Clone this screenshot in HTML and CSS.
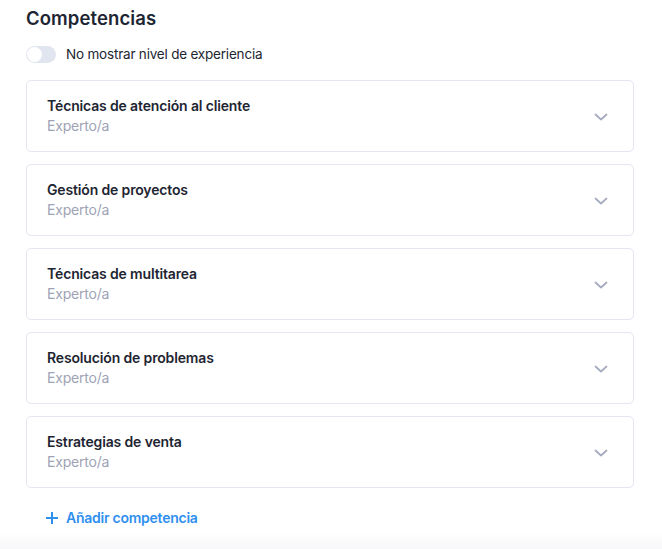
FILE: index.html
```html
<!DOCTYPE html>
<html lang="es">
<head>
<meta charset="utf-8">
<link rel="stylesheet" href="styles.css">
</head>
<body>
<div class="page">
  <h2 class="title">Competencias</h2>
  <label class="toggle-row">
    <span class="toggle"><span class="knob"></span></span>
    <span class="toggle-label">No mostrar nivel de experiencia</span>
  </label>
  <div class="list">
    <div class="card">
      <div class="card-text"><div class="card-title">Técnicas de atención al cliente</div><div class="card-sub">Experto/a</div></div>
      <svg class="chev" width="14" height="8" viewBox="0 0 14 8"><path d="M1.5 1.5 L7 6.5 L12.5 1.5" fill="none" stroke="#a7abc0" stroke-width="1.8" stroke-linecap="round" stroke-linejoin="round"/></svg>
    </div>
    <div class="card">
      <div class="card-text"><div class="card-title">Gestión de proyectos</div><div class="card-sub">Experto/a</div></div>
      <svg class="chev" width="14" height="8" viewBox="0 0 14 8"><path d="M1.5 1.5 L7 6.5 L12.5 1.5" fill="none" stroke="#a7abc0" stroke-width="1.8" stroke-linecap="round" stroke-linejoin="round"/></svg>
    </div>
    <div class="card">
      <div class="card-text"><div class="card-title">Técnicas de multitarea</div><div class="card-sub">Experto/a</div></div>
      <svg class="chev" width="14" height="8" viewBox="0 0 14 8"><path d="M1.5 1.5 L7 6.5 L12.5 1.5" fill="none" stroke="#a7abc0" stroke-width="1.8" stroke-linecap="round" stroke-linejoin="round"/></svg>
    </div>
    <div class="card">
      <div class="card-text"><div class="card-title">Resolución de problemas</div><div class="card-sub">Experto/a</div></div>
      <svg class="chev" width="14" height="8" viewBox="0 0 14 8"><path d="M1.5 1.5 L7 6.5 L12.5 1.5" fill="none" stroke="#a7abc0" stroke-width="1.8" stroke-linecap="round" stroke-linejoin="round"/></svg>
    </div>
    <div class="card">
      <div class="card-text"><div class="card-title">Estrategias de venta</div><div class="card-sub">Experto/a</div></div>
      <svg class="chev" width="14" height="8" viewBox="0 0 14 8"><path d="M1.5 1.5 L7 6.5 L12.5 1.5" fill="none" stroke="#a7abc0" stroke-width="1.8" stroke-linecap="round" stroke-linejoin="round"/></svg>
    </div>
  </div>
  <div class="add">
    <svg width="12" height="12" viewBox="0 0 12 12"><path d="M6 1 V11 M1 6 H11" stroke="#2f8fef" stroke-width="2" stroke-linecap="square"/></svg>
    <span>Añadir competencia</span>
  </div>
</div>
<div class="fade"></div>
</body>
</html>
```
FILE: styles.css
```css
* { box-sizing: border-box; }
html, body { margin: 0; padding: 0; background: #fff; }
body {
  font-family: Inter, "Noto Sans", "Liberation Sans", sans-serif;
  color: #1e2532;
  height: 549px;
  overflow: hidden;
  display: flex;
  flex-direction: column;
}
.page {
  padding: 6px 28px 0 26px;
  flex: 1;
}
.title {
  margin: 0;
  font-size: 18.5px;
  font-weight: 600;
  line-height: 24px;
  letter-spacing: 0.1px;
  color: #1e2532;
}
.toggle-row {
  display: flex;
  align-items: center;
  gap: 10px;
  margin-top: 13px;
  height: 22px;
}
.toggle {
  width: 30px;
  height: 17px;
  border-radius: 9px;
  background: #e1e5f0;
  position: relative;
}
.knob {
  position: absolute;
  left: 1px;
  top: 1px;
  width: 15px;
  height: 15px;
  border-radius: 50%;
  background: #fff;
}
.toggle-label {
  font-size: 13.5px;
  letter-spacing: -0.2px;
  color: #1e2532;
}
.list {
  margin-top: 15px;
  display: flex;
  flex-direction: column;
  gap: 12px;
}
.card {
  height: 72px;
  border: 1px solid #e5e6f1;
  border-radius: 5px;
  display: flex;
  align-items: center;
  justify-content: space-between;
  padding: 0 25px 0 20px;
}
.card-text { display: flex; flex-direction: column; }
.card-title {
  font-size: 14px;
  font-weight: 600;
  line-height: 20px;
  letter-spacing: -0.15px;
  color: #1e2532;
}
.card-sub {
  font-size: 14px;
  line-height: 20px;
  letter-spacing: -0.2px;
  color: #9ea3b6;
}
.chev { display: block; margin-top: 2px; }
.add {
  display: flex;
  align-items: center;
  gap: 8px;
  margin-top: 21px;
  padding-left: 20px;
  color: #2f8fef;
  font-size: 14px;
  font-weight: 600;
  letter-spacing: -0.25px;
}
.fade {
  height: 18px;
  background: linear-gradient(#ffffff, #f7f7f9);
}
```
